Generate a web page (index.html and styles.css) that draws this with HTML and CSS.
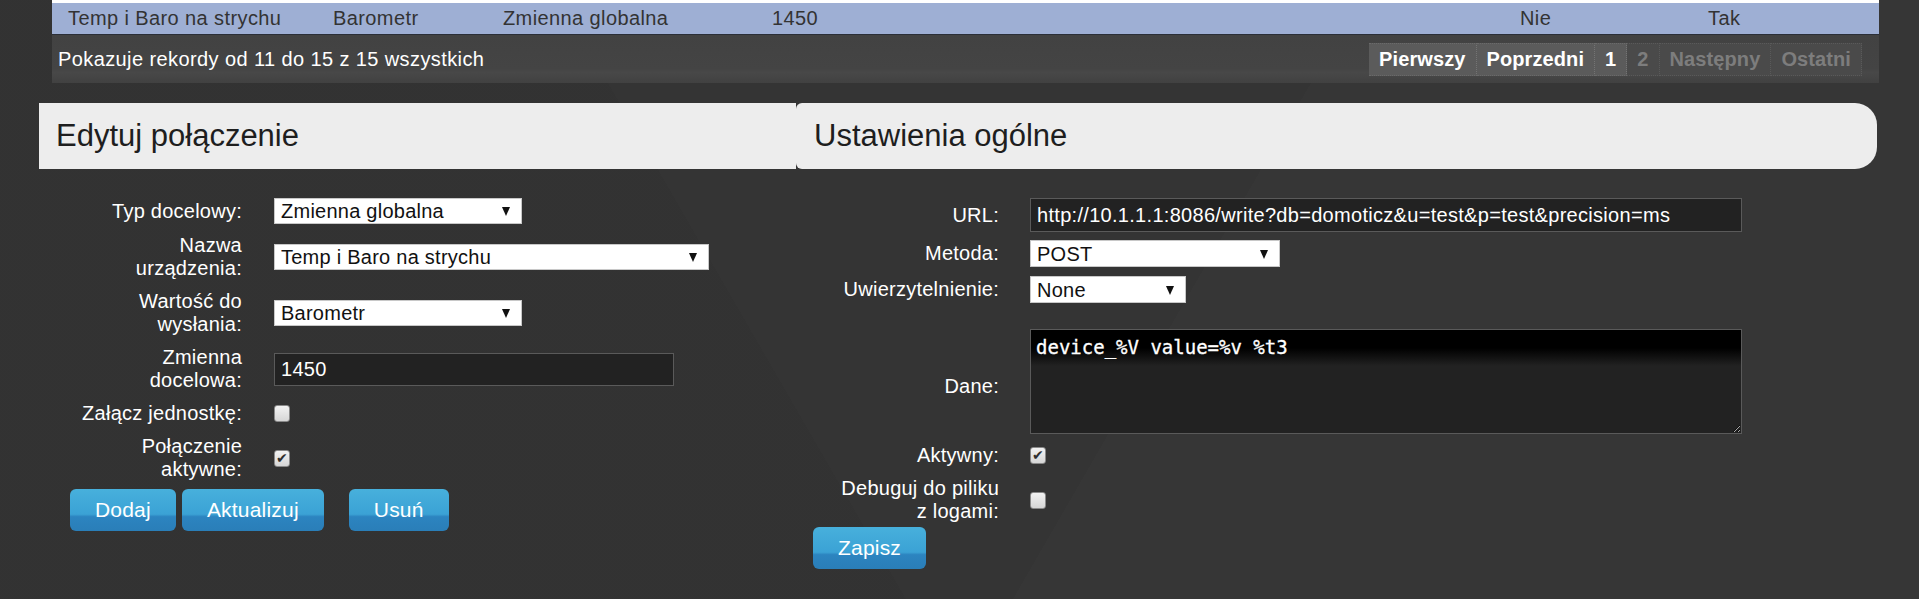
FILE: index.html
```html
<!DOCTYPE html>
<html lang="pl">
<head>
<meta charset="utf-8">
<title>Edytuj połączenie</title>
<link rel="stylesheet" href="styles.css">
</head>
<body>
<div class="page">
  <div class="grid">
    <div class="prev-row"></div>
    <div class="row-sel">
      <span class="col c1">Temp i Baro na strychu</span>
      <span class="col c2">Barometr</span>
      <span class="col c3">Zmienna globalna</span>
      <span class="col c4">1450</span>
      <span class="col c5">Nie</span>
      <span class="col c6">Tak</span>
    </div>
    <div class="tfoot">
      <div class="info">Pokazuje rekordy od 11 do 15 z 15 wszystkich</div>
      <div class="paging">
        <a class="pg">Pierwszy</a>
        <a class="pg">Poprzedni</a>
        <a class="pg">1</a>
        <a class="pg off">2</a>
        <a class="pg off">Następny</a>
        <a class="pg off last">Ostatni</a>
      </div>
    </div>
  </div>

  <div class="panels">
    <section class="panel left">
      <h2 class="phead">Edytuj połączenie</h2>
      <div class="form form-left">
        <div class="frow">
          <label class="lbl">Typ docelowy:</label>
          <div class="sel w248"><select><option>Zmienna globalna</option></select></div>
        </div>
        <div class="frow">
          <label class="lbl">Nazwa<br>urządzenia:</label>
          <div class="sel w435"><select><option>Temp i Baro na strychu</option></select></div>
        </div>
        <div class="frow">
          <label class="lbl">Wartość do<br>wysłania:</label>
          <div class="sel w248"><select><option>Barometr</option></select></div>
        </div>
        <div class="frow">
          <label class="lbl">Zmienna<br>docelowa:</label>
          <input class="txt w400" type="text" value="1450">
        </div>
        <div class="frow">
          <label class="lbl">Załącz jednostkę:</label>
          <input class="chk" type="checkbox">
        </div>
        <div class="frow">
          <label class="lbl">Połączenie<br>aktywne:</label>
          <input class="chk" type="checkbox" checked>
        </div>
        <div class="btns">
          <button class="btn">Dodaj</button>
          <button class="btn">Aktualizuj</button>
          <button class="btn sep">Usuń</button>
        </div>
      </div>
    </section>

    <section class="panel right">
      <h2 class="phead">Ustawienia ogólne</h2>
      <div class="form form-right">
        <div class="frow r-url">
          <label class="lbl">URL:</label>
          <input class="txt w712 h34" type="text" value="http://10.1.1.1:8086/write?db=domoticz&amp;u=test&amp;p=test&amp;precision=ms">
        </div>
        <div class="frow r-met">
          <label class="lbl">Metoda:</label>
          <div class="sel w250 h27"><select><option>POST</option></select></div>
        </div>
        <div class="frow r-auth">
          <label class="lbl">Uwierzytelnienie:</label>
          <div class="sel w156 h27"><select><option>None</option></select></div>
        </div>
        <div class="frow r-data">
          <label class="lbl lbl-data">Dane:</label>
          <textarea class="area">device_%V value=%v %t3</textarea>
        </div>
        <div class="frow r-act">
          <label class="lbl">Aktywny:</label>
          <input class="chk" type="checkbox" checked>
        </div>
        <div class="frow r-dbg">
          <label class="lbl">Debuguj do piliku<br>z logami:</label>
          <input class="chk" type="checkbox">
        </div>
        <div class="btns r-btns">
          <button class="btn">Zapisz</button>
        </div>
      </div>
    </section>
  </div>
</div>
</body>
</html>
```

FILE: styles.css
```css
* { box-sizing: border-box; }

html, body {
  margin: 0;
  padding: 0;
}

body {
  background-color: #343434;
  background-image:
    linear-gradient(120deg, rgba(255,255,255,0) 60%, rgba(255,255,255,0.01) 60%),
    linear-gradient(60deg, rgba(0,0,0,0.03) 40%, rgba(0,0,0,0) 40%);
  font-family: "Liberation Sans", Arial, sans-serif;
  font-size: 20px;
  letter-spacing: 0.25px;
  color: #fff;
  width: 1919px;
  height: 599px;
  overflow: hidden;
}

.page {
  display: flex;
  flex-direction: column;
}

/* ---------- table remnant ---------- */
.grid {
  margin-left: 52px;
  width: 1827px;
}

.prev-row {
  height: 3px;
  background: #fff;
}

.row-sel {
  display: flex;
  align-items: center;
  height: 32px;
  padding-left: 16px;
  background: #9eafd4;
  border-bottom: 1px solid #2b2f38;
  color: #333;
  letter-spacing: 0.4px;
  white-space: nowrap;
}

.col { display: block; }
.c1 { width: 265px; }
.c2 { width: 170px; }
.c3 { width: 269px; }
.c4 { width: 748px; }
.c5 { width: 188px; }
.c6 { width: auto; }

.tfoot {
  display: flex;
  align-items: center;
  justify-content: space-between;
  height: 48px;
  padding: 0 17px 0 6px;
  background: linear-gradient(to bottom, #424242 0%, #444 70%, #484848 78%, #414141 100%);
}

.info {
  color: #fff;
  letter-spacing: 0.4px;
}

.paging {
  display: flex;
  height: 33px;
}

.pg {
  display: flex;
  align-items: center;
  padding: 0 10px;
  font-weight: bold;
  letter-spacing: 0.1px;
  color: #fff;
  background: #5b5b5b;
  border-right: 1px dotted #747474;
  border-top: 1px dotted #6a6a6a;
  border-bottom: 1px dotted #6a6a6a;
  cursor: pointer;
}

.pg.off {
  color: #7d7d7d;
  background: #4a4a4a;
  border-color: #5a5a5a;
}

.pg.last { border-right: 1px dotted #5a5a5a; }

/* ---------- panels ---------- */
.panels {
  display: flex;
  margin-top: 20px;
  padding-left: 39px;
}

.panel.left { width: 757px; }
.panel.right { width: 1081px; }

.phead {
  display: flex;
  align-items: center;
  height: 66px;
  margin: 0;
  padding-left: 17px;
  background: #ededed;
  color: #1e1e1e;
  font-size: 31px;
  font-weight: normal;
  letter-spacing: 0;
}

.right .phead {
  padding-left: 18px;
  border-radius: 6px 22px 22px 6px;
}

.form {
  display: flex;
  flex-direction: column;
  padding-top: 29px;
}

.form-left { padding-left: 31px; }
.form-right { padding-left: 17px; }

.frow {
  display: flex;
  align-items: center;
  margin-bottom: 10px;
}

.lbl {
  flex: none;
  text-align: right;
  line-height: 23px;
  white-space: nowrap;
  color: #fff;
}

.form-left .lbl { width: 172px; margin-right: 32px; }
.form-right .lbl { width: 186px; margin-right: 31px; }

/* selects */
.sel {
  position: relative;
  height: 26px;
}

.sel select {
  appearance: none;
  -webkit-appearance: none;
  width: 100%;
  height: 100%;
  margin: 0;
  padding: 0 6px;
  border: 1px solid #c8c8c8;
  border-radius: 0;
  background: #fff;
  color: #111;
  font-family: "Liberation Sans", Arial, sans-serif;
  font-size: 20px;
  letter-spacing: 0.25px;
}

.sel::after {
  content: "";
  position: absolute;
  right: 12px;
  top: 50%;
  margin-top: -4px;
  border-left: 4px solid transparent;
  border-right: 4px solid transparent;
  border-top: 9px solid #111;
  pointer-events: none;
}

.w248 { width: 248px; }
.w435 { width: 435px; }
.w250 { width: 250px; }
.w156 { width: 156px; }
.h27 { height: 27px; }

/* text inputs */
.txt {
  height: 33px;
  margin: 0;
  padding: 0 6px;
  border: 1px solid #5a5a5a;
  border-radius: 0;
  background: #222;
  color: #fff;
  font-family: "Liberation Sans", Arial, sans-serif;
  font-size: 20px;
  letter-spacing: 0.3px;
}

.w400 { width: 400px; }
.w712 { width: 712px; }
.h34 { height: 34px; }

.area {
  width: 712px;
  height: 105px;
  margin: 0;
  padding: 5px 5px;
  border: 1px solid #5a5a5a;
  border-radius: 0;
  background: linear-gradient(to bottom, #000 0px, #000 18px, #222 36px, #222 100%);
  color: #fff;
  font-family: "DejaVu Sans Mono", "Liberation Mono", monospace;
  font-size: 19px;
  line-height: 24px;
  letter-spacing: 0;
  -webkit-text-stroke: 0.3px #fff;
}

.lbl-data { margin-top: 10px; }

/* checkboxes */
.chk {
  appearance: none;
  -webkit-appearance: none;
  position: relative;
  width: 16px;
  height: 17px;
  margin: 0;
  border: 1px solid #8a8a8a;
  border-radius: 3px;
  background: linear-gradient(to bottom, #f2f2f2, #d6d6d6);
}

.chk:checked::after {
  content: "\2714";
  position: absolute;
  left: 1px;
  top: 0;
  font-family: "DejaVu Sans", sans-serif;
  font-size: 14px;
  line-height: 15px;
  color: #2e2e2e;
}

/* buttons */
.btns {
  display: flex;
  margin-top: -2px;
}

.btn {
  height: 42px;
  margin: 0 6px 0 0;
  padding: 0 25px;
  border: none;
  border-radius: 6px;
  background: linear-gradient(to bottom, #47b0dc 0%, #3ba2d5 60%, #2c84c0 66%, #2a7eb8 100%);
  color: #fff;
  font-family: "Liberation Sans", Arial, sans-serif;
  font-size: 21px;
  letter-spacing: 0.2px;
  cursor: pointer;
}

.btn.sep { margin-left: 19px; }

/* right column spacing */
.r-url { margin-bottom: 8px; }
.r-met { margin-bottom: 9px; }
.r-auth { margin-bottom: 26px; }
.r-data { margin-bottom: 10px; }
.r-act { margin-bottom: 10px; }
.r-dbg { margin-bottom: 4px; }
.r-btns { margin-top: 0; }
```
